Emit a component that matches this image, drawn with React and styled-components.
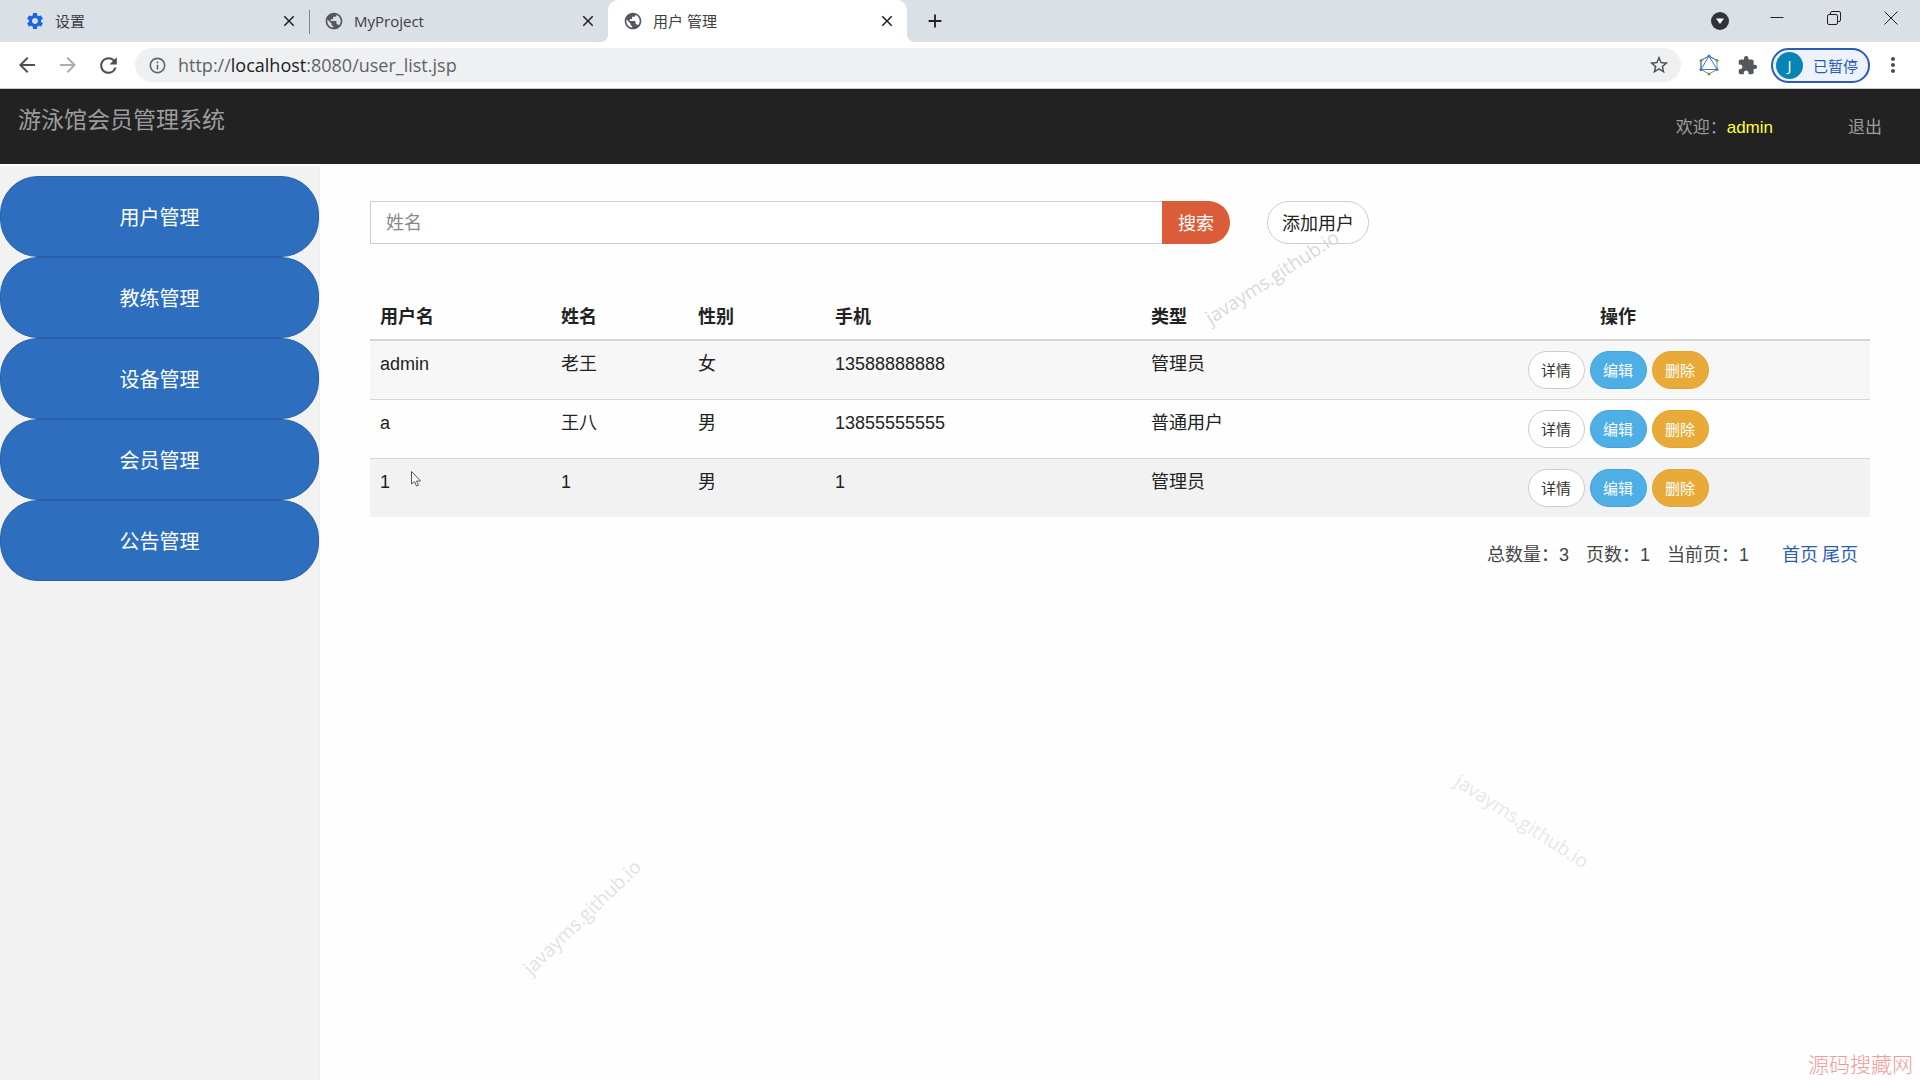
import React from "react";
import styled, {createGlobalStyle} from "styled-components";
import {
  MdAdd,
  MdArrowBack,
  MdArrowForward,
  MdClose,
  MdExtension,
  MdInfoOutline,
  MdMoreVert,
  MdPublic,
  MdRefresh,
  MdSettings,
  MdStarBorder,
} from "react-icons/md";

const uiFont = `"Open Sans", "Noto Sans CJK SC", sans-serif`;
const pageFont = `"Liberation Sans", "Noto Sans CJK SC", sans-serif`;

const GlobalStyle = createGlobalStyle`
  * {
    box-sizing: border-box;
  }
  body {
    margin: 0;
    background: #fff;
  }
  button, input {
    font-family: inherit;
  }
  button {
    padding: 0;
    border: 0;
    background: none;
    cursor: pointer;
  }
  svg {
    display: block;
    flex: none;
  }
`;

const Screen = styled.div`
  position: relative;
  display: flex;
  flex-direction: column;
  min-height: 100vh;
  overflow: hidden;
  font-family: ${pageFont};
`;

/* browser frame */
const TabStrip = styled.div`
  display: flex;
  height: 42px;
  padding: 0 1px 0 10px;
  background: #dbdfe6;
  font-family: ${uiFont};
`;

const Tab = styled.div`
  position: relative;
  display: flex;
  align-items: center;
  gap: 10px;
  width: 299px;
  padding: 0 12px 0 15px;
  font-size: 15px;
  line-height: 20px;
  color: #3c4043;
  background: ${(p) => (p.$active ? "#fff" : "none")};
  border-radius: ${(p) => (p.$active ? "10px 10px 0 0" : "0")};

  &::before,
  &::after {
    content: "";
    display: ${(p) => (p.$active ? "block" : "none")};
    position: absolute;
    bottom: 0;
    width: 8px;
    height: 8px;
  }
  &::before {
    right: 100%;
    background: radial-gradient(circle at 0 0, transparent 8px, #fff 8px);
  }
  &::after {
    left: 100%;
    background: radial-gradient(circle at 100% 0, transparent 8px, #fff 8px);
  }
`;

const TabTitle = styled.span`
  flex: 1;
  white-space: nowrap;
`;

const Divider = styled.div`
  width: 1px;
  height: 24px;
  margin: 10px -1px 0 0;
  background: #80868b;
`;

const IconButton = styled.button`
  display: flex;
  align-items: center;
  justify-content: center;
  width: ${(p) => p.$width || 16}px;
  color: ${(p) => p.$color || "#202124"};
`;

const NewTab = styled(IconButton)`
  margin-left: 17px;
`;

const WindowControls = styled.div`
  display: flex;
  height: 36px;
  margin-left: auto;
`;

const Toolbar = styled.div`
  display: flex;
  align-items: center;
  height: 47px;
  padding: 0 8px 0 7px;
  border-bottom: 1px solid #ccc;
  background: #fff;
  font-family: ${uiFont};
`;

const AddressBar = styled.div`
  flex: 1;
  display: flex;
  align-items: center;
  height: 34px;
  margin: 0 8px 0 7px;
  padding: 0 14px 0 13px;
  border-radius: 17px;
  background: #eff0f2;
  color: #5f6368;
`;

const Url = styled.div`
  flex: 1;
  margin-left: 11px;
  font-size: 18px;
  line-height: 24px;

  b {
    font-weight: 400;
    color: #202124;
  }
`;

const Profile = styled.button`
  display: flex;
  align-items: center;
  gap: 10px;
  height: 35px;
  margin: 0 4px;
  padding: 0 10px 0 3px;
  border: 2px solid #2a5bb5;
  border-radius: 18px;
  background: #edf2fc;
  color: #2a5bb5;
  font-size: 15px;
`;

const Avatar = styled.span`
  width: 27px;
  height: 27px;
  border-radius: 50%;
  background: #0684b4;
  color: #fff;
  line-height: 26px;
  text-align: center;
`;

/* site header and menu */
const Header = styled.header`
  display: flex;
  justify-content: space-between;
  height: 75px;
  padding: 0 38px 0 18px;
  background: #222;
  color: #9d9d9d;
  font-size: 17px;
  line-height: 25px;

  a {
    color: inherit;
    text-decoration: none;
  }
`;

const Brand = styled.a`
  padding-top: 19px;
  font-size: 23px;
`;

const Account = styled.div`
  display: flex;
  gap: 75px;
  padding-top: 26px;
`;

const UserName = styled.span`
  color: #ff3;
`;

const Layout = styled.div`
  flex: 1;
  display: flex;
`;

const Sidebar = styled.nav`
  width: 320px;
  margin-top: 2px;
  padding-top: 10px;
  border-right: 1px solid #eee;
  background: #f2f2f2;
`;

const MenuButton = styled.button`
  display: block;
  width: 100%;
  height: 81px;
  border: 1px solid #2861a9;
  border-radius: 38px;
  background: #2d6fbe;
  color: #fff;
  font-size: 20px;
`;

const Content = styled.main`
  flex: 1;
  padding: 37px 50px 0;
  background: #fefefe;
  color: #222;
  font-size: 18px;
  line-height: 25px;
`;

const Filters = styled.div`
  display: flex;
  gap: 37px;
  margin-bottom: 50px;
`;

const SearchForm = styled.form`
  display: flex;
  width: 860px;
`;

const SearchInput = styled.input`
  flex: 1;
  height: 43px;
  padding: 2px 15px 0;
  border: 1px solid #ccc;
  border-right: 0;
  border-radius: 0;
  background: #fff;
  font-size: 18px;
  outline: none;

  &::placeholder {
    color: #888;
  }
`;

const SearchButton = styled.button`
  width: 68px;
  padding-bottom: 2px;
  border-radius: 0 22px 22px 0;
  background: #db5c38;
  color: #fff;
  font-size: 18px;
`;

const AddButton = styled.button`
  height: 43px;
  padding: 0 14px 2px;
  border: 1px solid #ccc;
  border-radius: 22px;
  background: #fff;
  color: #222;
  font-size: 18px;
`;

const Table = styled.table`
  width: 100%;
  table-layout: fixed;
  border-spacing: 0;

  th,
  td {
    padding: 10px;
    text-align: left;
    vertical-align: top;
    line-height: 27px;
  }
  th {
    padding: 10px 10px 8px;
    border-bottom: 2px solid #d4d4d4;
    font-weight: 700;
  }
  tr + tr td {
    border-top: 1px solid #d4d4d4;
  }
  tr :last-child {
    text-align: center;
  }
`;

const Row = styled.tr`
  background: ${(p) => p.$bg};
`;

const Actions = styled.div`
  display: flex;
  justify-content: center;
  gap: 5px;
`;

const ActionButton = styled.button`
  width: 57px;
  height: 38px;
  padding-bottom: 2px;
  border: 1px solid ${(p) => p.$border};
  border-radius: 19px;
  background: ${(p) => p.$bg};
  color: ${(p) => p.$color};
  font-size: 15px;
`;

const Pager = styled.div`
  display: flex;
  justify-content: flex-end;
  gap: 17px;
  padding: 26px 12px 0 0;
  color: #444;
`;

const PagerLinks = styled.span`
  display: flex;
  gap: 4px;
  margin-left: 16px;

  a {
    color: #2b5fae;
    text-decoration: none;
  }
`;

/* things floating over the page */
const Watermark = styled.span`
  position: absolute;
  left: ${(p) => p.$x}px;
  top: ${(p) => p.$y}px;
  transform: translate(-50%, -50%) rotate(${(p) => p.$angle}deg);
  color: ${(p) => p.$color};
  font-family: ${uiFont};
  font-size: 19px;
  line-height: 24px;
  white-space: nowrap;
  pointer-events: none;
`;

const SiteMark = styled.span`
  position: absolute;
  right: 7px;
  bottom: 3px;
  color: #f09a9a;
  font-family: "Noto Sans CJK SC", sans-serif;
  font-size: 21px;
  font-weight: 300;
  line-height: 28px;
`;

const Pointer = styled.svg`
  position: absolute;
  left: 411px;
  top: 471px;
`;

const menu = ["用户管理", "教练管理", "设备管理", "会员管理", "公告管理"];

const users = [
  {account: "admin", name: "老王", sex: "女", phone: "13588888888", type: "管理员", bg: "#f7f7f7"},
  {account: "a", name: "王八", sex: "男", phone: "13855555555", type: "普通用户", bg: "#fefefe"},
  {account: "1", name: "1", sex: "男", phone: "1", type: "管理员", bg: "#f2f2f2"},
];

function BrowserFrame() {
  return (
    <>
      <TabStrip>
        <Tab>
          <MdSettings size={20} color="#1a66e0" />
          <TabTitle>设置</TabTitle>
          <IconButton aria-label="关闭"><MdClose size={18} /></IconButton>
        </Tab>
        <Divider />
        <Tab>
          <MdPublic size={20} color="#54585d" />
          <TabTitle>MyProject</TabTitle>
          <IconButton aria-label="关闭"><MdClose size={18} /></IconButton>
        </Tab>
        <Tab $active>
          <MdPublic size={20} color="#54585d" />
          <TabTitle>用户 管理</TabTitle>
          <IconButton aria-label="关闭"><MdClose size={18} /></IconButton>
        </Tab>
        <NewTab $width={22} aria-label="新标签页"><MdAdd size={22} /></NewTab>
        <WindowControls>
          <IconButton $width={56} aria-label="搜索标签页">
            <svg width="18" height="24" viewBox="0 0 18 24">
              <circle cx="9" cy="15" r="9" fill="#30343a" />
              <path d="M5 12.500h8L9 18z" fill="#fff" />
            </svg>
          </IconButton>
          <IconButton $width={57} aria-label="最小化">
            <svg width="14" height="14" viewBox="0 0 14 14">
              <path d="M0.500 6.500h13" stroke="currentColor" />
            </svg>
          </IconButton>
          <IconButton $width={57} aria-label="还原">
            <svg width="14" height="14" viewBox="0 0 14 14" fill="none" stroke="currentColor">
              <rect x="0.500" y="3.500" width="10" height="10" rx="1.500" />
              <path d="M3.500 3.500V2q0-1.500 1.500-1.500h7q1.500 0 1.500 1.500v7q0 1.500-1.500 1.500h-1.500" />
            </svg>
          </IconButton>
          <IconButton $width={57} aria-label="关闭窗口">
            <svg width="14" height="14" viewBox="0 0 14 14">
              <path d="M0.500 0.500l13 13M13.500 0.500l-13 13" stroke="currentColor" />
            </svg>
          </IconButton>
        </WindowControls>
      </TabStrip>
      <Toolbar>
        <IconButton $width={40} $color="#4b4f54" aria-label="后退"><MdArrowBack size={24} /></IconButton>
        <IconButton $width={41} $color="#aaadb1" aria-label="前进"><MdArrowForward size={24} /></IconButton>
        <IconButton $width={40} $color="#4b4f54" aria-label="刷新"><MdRefresh size={25} /></IconButton>
        <AddressBar>
          <MdInfoOutline size={19} />
          <Url>
            http://<b>localhost</b>:8080/user_list.jsp
          </Url>
          <IconButton $color="#4b4f54" aria-label="收藏"><MdStarBorder size={22} /></IconButton>
        </AddressBar>
        <IconButton $width={40} aria-label="扩展">
          <svg width="20" height="22" viewBox="0 0 20 22" fill="none">
            <path d="M10 2l8 4.500v9L10 20l-8-4.500v-9z" stroke="#6b9a55" />
            <path d="M10 2L2 15.500h16z M2 15.500v-9L10 2l8 4.500" stroke="#3d74c8" />
            <g fill="#3d74c8">
              <circle cx="10" cy="2" r="1.500" />
              <circle cx="2" cy="15.500" r="1.500" />
              <circle cx="18" cy="15.500" r="1.500" />
            </g>
            <g fill="#6b9a55">
              <circle cx="2" cy="6.500" r="1.500" />
              <circle cx="18" cy="6.500" r="1.500" />
              <circle cx="10" cy="20" r="1.500" />
            </g>
          </svg>
        </IconButton>
        <IconButton $width={38} $color="#54585d" aria-label="扩展程序"><MdExtension size={21} /></IconButton>
        <Profile>
          <Avatar>J</Avatar>
          已暂停
        </Profile>
        <IconButton $width={38} $color="#4b4f54" aria-label="菜单"><MdMoreVert size={24} /></IconButton>
      </Toolbar>
    </>
  );
}

function UserTable() {
  return (
    <Table>
      <colgroup>
        <col width="181" />
        <col width="137" />
        <col width="137" />
        <col width="316" />
        <col width="225" />
        <col />
      </colgroup>
      <thead>
        <tr>
          <th>用户名</th>
          <th>姓名</th>
          <th>性别</th>
          <th>手机</th>
          <th>类型</th>
          <th>操作</th>
        </tr>
      </thead>
      <tbody>
        {users.map((user) => (
          <Row key={user.account} $bg={user.bg}>
            <td>{user.account}</td>
            <td>{user.name}</td>
            <td>{user.sex}</td>
            <td>{user.phone}</td>
            <td>{user.type}</td>
            <td>
              <Actions>
                <ActionButton $bg="#fff" $border="#ccc" $color="#333">详情</ActionButton>
                <ActionButton $bg="#4eaee6" $border="#45a3dc" $color="#fff">编辑</ActionButton>
                <ActionButton $bg="#e8ab3a" $border="#e4a32c" $color="#fff">删除</ActionButton>
              </Actions>
            </td>
          </Row>
        ))}
      </tbody>
    </Table>
  );
}

function App() {
  return (
    <Screen>
      <GlobalStyle />
      <BrowserFrame />
      <Header>
        <Brand href="#">游泳馆会员管理系统</Brand>
        <Account>
          <span>
            欢迎：<UserName>admin</UserName>
          </span>
          <a href="#">退出</a>
        </Account>
      </Header>
      <Layout>
        <Sidebar>
          {menu.map((item) => (
            <MenuButton key={item}>{item}</MenuButton>
          ))}
        </Sidebar>
        <Content>
          <Filters>
            <SearchForm onSubmit={(e) => e.preventDefault()}>
              <SearchInput type="text" placeholder="姓名" aria-label="姓名" />
              <SearchButton type="submit">搜索</SearchButton>
            </SearchForm>
            <AddButton>添加用户</AddButton>
          </Filters>
          <UserTable />
          <Pager>
            <span>总数量：3</span>
            <span>页数：1</span>
            <span>当前页：1</span>
            <PagerLinks>
              <a href="#">首页</a>
              <a href="#">尾页</a>
            </PagerLinks>
          </Pager>
        </Content>
      </Layout>
      <Watermark $x={1272} $y={277} $angle={-33} $color="#d9d9d9">javayms.github.io</Watermark>
      <Watermark $x={582} $y={917} $angle={-44} $color="#e2e2e2">javayms.github.io</Watermark>
      <Watermark $x={1522} $y={821} $angle={33} $color="#e8e8e8">javayms.github.io</Watermark>
      <SiteMark>源码搜藏网</SiteMark>
      <Pointer width="11" height="16" viewBox="0 0 11 16">
        <path
          d="M0.500 0.500v12.500l3-2.500 2 4.500 2-1-2-4h4z"
          fill="#fff"
          stroke="#555"
          strokeWidth="1"
        />
      </Pointer>
    </Screen>
  );
}

export default App;
